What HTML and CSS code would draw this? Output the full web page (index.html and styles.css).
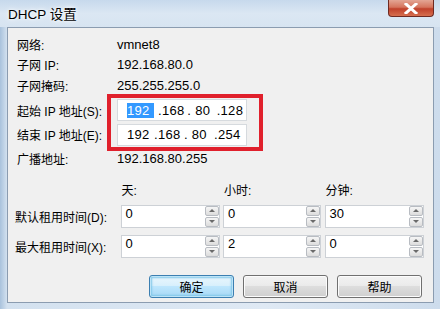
FILE: index.html
```html
<!DOCTYPE html>
<html lang="zh-CN">
<head>
  <meta charset="UTF-8" />
  <title>DHCP 设置</title>
  <link rel="stylesheet" href="styles.css">
</head>
<body>

  <div class="window">
    <div class="titlebar">
      <span class="title">DHCP 设置</span>
      <span class="close">
        <svg width="14" height="11" viewBox="0 0 14 11"><path d="M2 1 L12 10 M12 1 L2 10" stroke="#fff" stroke-width="3" stroke-linecap="square"/></svg>
      </span>
    </div>

    <div class="client">
      <div class="info">
        <div class="row"><span class="lbl">网络:</span><span class="val">vmnet8</span></div>
        <div class="row"><span class="lbl">子网 IP:</span><span class="val">192.168.80.0</span></div>
        <div class="row"><span class="lbl">子网掩码:</span><span class="val">255.255.255.0</span></div>
        <div class="row ip-row first">
          <span class="lbl">起始 IP 地址(S):</span>
          <div class="ipbox"><span class="sel">192</span><span>.168</span><span>.&nbsp;80</span><span>.128</span></div>
        </div>
        <div class="row ip-row">
          <span class="lbl">结束 IP 地址(E):</span>
          <div class="ipbox"><span>192</span><span>.168</span><span>.&nbsp;80</span><span>.254</span></div>
        </div>
        <div class="row"><span class="lbl">广播地址:</span><span class="val">192.168.80.255</span></div>
        <div class="mark"></div>
      </div>

      <div class="lease">
        <span></span><span class="head">天:</span><span class="head">小时:</span><span class="head">分钟:</span>

        <span class="lbl">默认租用时间(D):</span>
        <div class="spin"><span class="num">0</span><span class="arrows"><i class="up"></i><i class="down"></i></span></div>
        <div class="spin"><span class="num">0</span><span class="arrows"><i class="up"></i><i class="down"></i></span></div>
        <div class="spin"><span class="num">30</span><span class="arrows"><i class="up"></i><i class="down"></i></span></div>

        <span class="lbl">最大租用时间(X):</span>
        <div class="spin"><span class="num">0</span><span class="arrows"><i class="up"></i><i class="down"></i></span></div>
        <div class="spin"><span class="num">2</span><span class="arrows"><i class="up"></i><i class="down"></i></span></div>
        <div class="spin"><span class="num">0</span><span class="arrows"><i class="up"></i><i class="down"></i></span></div>
      </div>

      <div class="buttons">
        <button class="btn default">确定</button>
        <button class="btn">取消</button>
        <button class="btn">帮助</button>
      </div>
    </div>
  </div>

</body>
</html>
```

FILE: styles.css
```css
* { margin: 0; padding: 0; box-sizing: border-box; }
html, body {
  width: 440px;
  height: 309px;
  overflow: hidden;
  font-family: "Liberation Sans", "Noto Sans CJK SC", sans-serif;
  font-size: 13px;
  color: #000;
  background: #dbe6f2;
}

.window {
  width: 440px;
  height: 309px;
  display: flex;
  flex-direction: column;
  background: linear-gradient(90deg, #a9c2dc 0px, #d3e1ef 7px, #dfe9f4 60%, #cddcec 100%);
}

.titlebar {
  height: 27px;
  flex: none;
  position: relative;
  padding-left: 8px;
  display: flex;
  align-items: center;
  background: linear-gradient(180deg, #c7d9ec 0%, #dbe7f3 50%, #d7e4f1 100%);
}

.title {
  font-size: 13.5px;
  color: #000;
  padding-bottom: 2px;
  text-shadow: 0 0 6px #fff, 0 0 3px #fff;
}

/* close button */
.close {
  position: absolute;
  top: 0;
  right: 6px;
  width: 46px;
  height: 17px;
  border: 1px solid #6e2a22;
  border-top: none;
  border-radius: 0 0 4px 4px;
  background: linear-gradient(180deg, #e3a594 0%, #d5745d 45%, #c0412b 55%, #d66f4f 100%);
  display: flex;
  justify-content: center;
  align-items: center;
}

.client {
  flex: 1;
  margin: 0 6px 6px 7px;
  background: #f0f0f0;
  border: 1px solid #8b9cb0;
  padding: 6px 0 0 9px;
  display: flex;
  flex-direction: column;
}

.info {
  position: relative;
  width: 300px;
}

.row {
  height: 20px;
  display: flex;
  align-items: center;
}

.row .lbl {
  width: 100px;
  font-size: 12px;
  white-space: nowrap;
}

.row + .row { margin-top: 0.5px; }

.ip-row {
  height: 24px;
  margin-top: 2px;
}
.ip-row.first { margin-top: 3px; }
.ip-row + .row:not(.ip-row) { margin-top: 2px; }

.ipbox {
  width: 130px;
  height: 22px;
  background: #fff;
  border: 1px solid #d6dade;
  display: flex;
  align-items: center;
  padding-left: 9px;
  font-size: 13px;
  letter-spacing: 0.3px;
}

.ipbox span { width: 30px; }
.ipbox span:first-child { width: 27px; }

.ipbox .sel {
  background: #3399ff;
  color: #fff;
  flex: none;
  width: 23px;
  margin-right: 4px;
}

/* red annotation frame */
.mark {
  position: absolute;
  left: 90px;
  top: 60px;
  width: 156px;
  height: 57px;
  border: 4px solid #e0202c;
}

.lease {
  margin-top: 15px;
  display: grid;
  grid-template-columns: 100px 99px 98px 99px;
  column-gap: 3.5px;
  row-gap: 7px;
  align-items: center;
}

.lease .head {
  font-size: 12px;
  padding-left: 1px;
  height: 14px;
  line-height: 14px;
  margin-bottom: 0;
}

.lease .lbl {
  font-size: 12px;
  white-space: nowrap;
  margin-left: -2px;
}

.spin {
  height: 23px;
  background: #fff;
  border: 1px solid #cdd1d6;
  display: flex;
  align-items: center;
  justify-content: space-between;
}

.spin .num {
  padding-left: 4px;
  margin-top: -6px;
  font-size: 13px;
}

.arrows {
  width: 14px;
  height: 21px;
  display: flex;
  flex-direction: column;
  gap: 1px;
}

.arrows i {
  flex: 1;
  border: 1px solid #b8bcc2;
  border-radius: 2px;
  background: linear-gradient(180deg, #f6f6f6, #dcdcdc);
  display: flex;
  justify-content: center;
  align-items: center;
}

.arrows .up::after {
  content: "";
  border-left: 3px solid transparent;
  border-right: 3px solid transparent;
  border-bottom: 3px solid #6a6a6a;
}

.arrows .down::after {
  content: "";
  border-left: 3px solid transparent;
  border-right: 3px solid transparent;
  border-top: 3px solid #6a6a6a;
}

.buttons {
  margin-top: 17px;
  display: flex;
  justify-content: flex-end;
  gap: 9px;
  padding-right: 11px;
}

.btn {
  width: 85px;
  height: 23px;
  font-family: "Noto Sans CJK SC", sans-serif;
  font-size: 12px;
  color: #000;
  border: 1px solid #707070;
  border-radius: 3px;
  background: linear-gradient(180deg, #f2f2f2 0%, #ebebeb 45%, #dddddd 50%, #cfcfcf 100%);
  box-shadow: inset 0 0 0 1px #fcfcfc;
}

.btn.default {
  border-color: #3c7fb1;
  background: linear-gradient(180deg, #eaf6fd 0%, #d9f0fc 45%, #bee6fd 50%, #a7d9f5 100%);
  box-shadow: inset 0 0 0 1px #bde4f7, inset 0 0 2px 2px #80c6e8;
}
```
